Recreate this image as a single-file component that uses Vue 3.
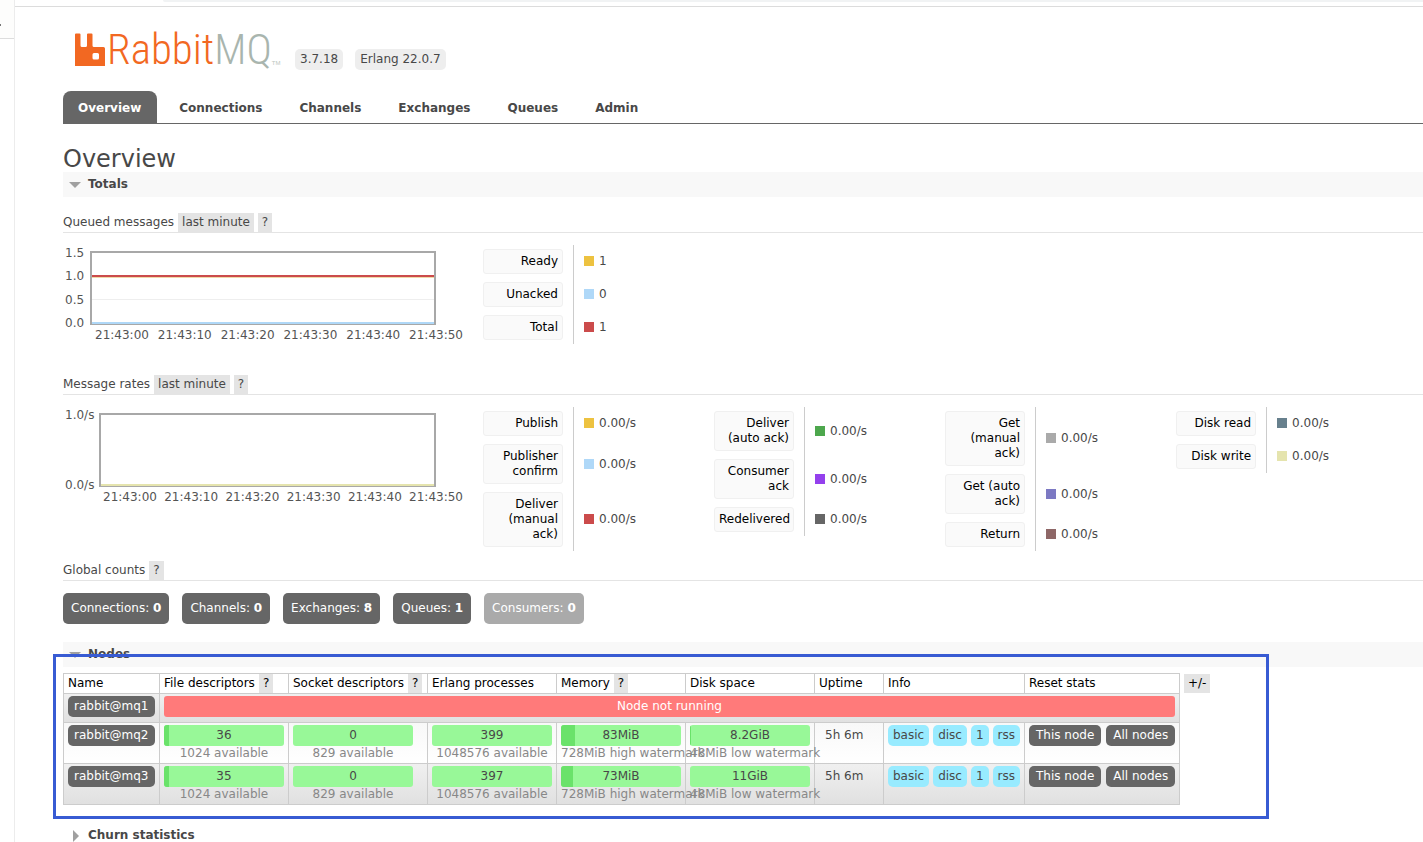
<script setup>
const tabs = ['Overview', 'Connections', 'Channels', 'Exchanges', 'Queues', 'Admin']

const queued = {
  ticks: ['1.5', '1.0', '0.5', '0.0'],
  legend: [
    { label: 'Ready', color: '#edc240', value: '1' },
    { label: 'Unacked', color: '#afd8f8', value: '0' },
    { label: 'Total', color: '#cb4b4b', value: '1' },
  ],
}

const times = ['21:43:00', '21:43:10', '21:43:20', '21:43:30', '21:43:40', '21:43:50']

const rates = [
  [
    { label: 'Publish', color: '#edc240' },
    { label: 'Publisher confirm', color: '#afd8f8' },
    { label: 'Deliver (manual ack)', color: '#cb4b4b' },
  ],
  [
    { label: 'Deliver (auto ack)', color: '#4da74d' },
    { label: 'Consumer ack', color: '#9440ed' },
    { label: 'Redelivered', color: '#666666' },
  ],
  [
    { label: 'Get (manual ack)', color: '#aaaaaa' },
    { label: 'Get (auto ack)', color: '#7c79c3' },
    { label: 'Return', color: '#8e6767' },
  ],
  [
    { label: 'Disk read', color: '#67808d' },
    { label: 'Disk write', color: '#e5e4ae' },
  ],
]

const counts = [
  { label: 'Connections', value: 0 },
  { label: 'Channels', value: 0 },
  { label: 'Exchanges', value: 8 },
  { label: 'Queues', value: 1 },
  { label: 'Consumers', value: 0, disabled: true },
]

const columns = [
  { label: 'Name' },
  { label: 'File descriptors', help: true },
  { label: 'Socket descriptors', help: true },
  { label: 'Erlang processes' },
  { label: 'Memory', help: true },
  { label: 'Disk space' },
  { label: 'Uptime' },
  { label: 'Info' },
  { label: 'Reset stats' },
]

const nodes = [
  {
    name: 'rabbit@mq2',
    bars: [
      { value: '36', used: 4, note: '1024 available' },
      { value: '0', used: 0, note: '829 available' },
      { value: '399', used: 0, note: '1048576 available' },
      { value: '83MiB', used: 12, note: '728MiB high watermark' },
      { value: '8.2GiB', used: 1, note: '48MiB low watermark' },
    ],
  },
  {
    name: 'rabbit@mq3',
    bars: [
      { value: '35', used: 4, note: '1024 available' },
      { value: '0', used: 0, note: '829 available' },
      { value: '397', used: 0, note: '1048576 available' },
      { value: '73MiB', used: 10, note: '728MiB high watermark' },
      { value: '11GiB', used: 0, note: '48MiB low watermark' },
    ],
  },
]
const info = ['basic', 'disc', '1', 'rss']
</script>

<template>
  <div class="window">
    <div class="side"><div class="side-tab"><div class="side-mark"></div></div></div>
    <div class="content">
      <div class="topbar"><div class="address"></div></div>
      <main class="page">
        <header class="brand">
          <a class="logo" href="#" aria-label="RabbitMQ">
            <svg width="30" height="33" viewBox="0 0 30 33" aria-hidden="true">
              <path
                fill="#f26822" fill-rule="evenodd"
                d="M1 0.500H4.500Q5.500 0.500 5.500 1.500V12.500Q5.500 14 7 14H10.500Q12 14 12 12.500V1.500Q12 0.500 13 0.500H16.500Q17.500 0.500 17.500 1.500V12.500Q17.500 14 19 14H28.500Q30 14 30 15.500V33H0V1.500Q0 0.500 1 0.500ZM19 20Q17.500 20 17.500 21.500V25Q17.500 26.500 19 26.500H22.500Q24 26.500 24 25V21.500Q24 20 22.500 20Z"
              />
            </svg>
            <span class="word"><span class="word-a">Rabbit</span><span class="word-b">MQ</span></span>
            <span class="tm">TM</span>
          </a>
          <span class="version">3.7.18</span>
          <span class="version">Erlang 22.0.7</span>
        </header>

        <nav class="tabs">
          <a v-for="(t, i) in tabs" :key="t" href="#" :class="['tab', { selected: i === 0 }]">{{ t }}</a>
        </nav>

        <h1>Overview</h1>
        <h2 class="section"><span class="arrow-down"></span>Totals</h2>

        <h3 class="sub">
          Queued messages <button class="chip">last minute</button><button class="chip">?</button>
        </h3>
        <div class="row">
          <div class="chart">
            <div class="axis"><span v-for="t in queued.ticks" :key="t">{{ t }}</span></div>
            <svg class="plot" viewBox="0 0 346 74" preserveAspectRatio="none" aria-hidden="true">
              <path d="M2 48.500H344" stroke="#eeeeee" />
              <path d="M2 25.500H344" stroke="#f0d9a8" stroke-width="3" />
              <path d="M2 25H344" stroke="#cb4b4b" stroke-width="2" />
              <rect x="1" y="1" width="344" height="72" fill="none" stroke="#a8a8a8" stroke-width="2" />
              <path d="M2 72H344" stroke="#afd8f8" stroke-width="2" />
            </svg>
            <div class="times"><span v-for="t in times" :key="t">{{ t }}</span></div>
          </div>
          <table class="legend">
            <tbody>
              <tr v-for="l in queued.legend" :key="l.label">
                <th scope="row"><span class="label">{{ l.label }}</span></th>
                <td><span class="swatch" :style="{ background: l.color }"></span>{{ l.value }}</td>
              </tr>
            </tbody>
          </table>
        </div>

        <h3 class="sub">
          Message rates <button class="chip">last minute</button><button class="chip">?</button>
        </h3>
        <div class="row">
          <div class="chart wide">
            <div class="axis"><span>1.0/s</span><span>0.0/s</span></div>
            <svg class="plot" viewBox="0 0 337 74" preserveAspectRatio="none" aria-hidden="true">
              <rect x="1" y="1" width="335" height="72" fill="none" stroke="#a8a8a8" stroke-width="2" />
              <path d="M2 72H335" stroke="#e5e4ae" stroke-width="2" />
            </svg>
            <div class="times"><span v-for="t in times" :key="t">{{ t }}</span></div>
          </div>
          <table v-for="(group, g) in rates" :key="g" class="legend">
            <tbody>
              <tr v-for="l in group" :key="l.label">
                <th scope="row"><span class="label">{{ l.label }}</span></th>
                <td><span class="swatch" :style="{ background: l.color }"></span>0.00/s</td>
              </tr>
            </tbody>
          </table>
        </div>

        <h3 class="sub">Global counts <button class="chip">?</button></h3>
        <div class="counts">
          <a v-for="c in counts" :key="c.label" href="#" :class="['count', { disabled: c.disabled }]">{{ c.label }}: <strong>{{ c.value }}</strong></a>
        </div>

        <h2 class="section"><span class="arrow-down"></span>Nodes</h2>
        <div class="nodes">
          <div class="marker"></div>
          <table class="list">
            <colgroup><col v-for="c in columns" :key="c.label" :class="'col-' + c.label.split(' ')[0].toLowerCase()" /></colgroup>
            <thead>
              <tr>
                <th v-for="c in columns" :key="c.label" scope="col">{{ c.label }}<button v-if="c.help" class="chip">?</button></th>
              </tr>
            </thead>
            <tbody>
              <tr class="alt down">
                <td><a class="dark" href="#">rabbit@mq1</a></td>
                <td colspan="8"><div class="red">Node not running</div></td>
              </tr>
              <tr v-for="(n, i) in nodes" :key="n.name" :class="{ alt: i === 1 }">
                <td><a class="dark" href="#">{{ n.name }}</a></td>
                <td v-for="(b, k) in n.bars" :key="k">
                  <div class="bar"><div class="used" :style="{ width: b.used + '%' }"></div><span class="value">{{ b.value }}</span></div>
                  <div class="note">{{ b.note }}</div>
                </td>
                <td class="uptime">5h 6m</td>
                <td><div class="pills tight"><span v-for="x in info" :key="x" class="info">{{ x }}</span></div></td>
                <td><div class="pills"><button class="dark">This node</button><button class="dark">All nodes</button></div></td>
              </tr>
            </tbody>
          </table>
          <button class="chip toggle">+/-</button>
        </div>

        <h2 class="section closed"><span class="arrow-right"></span>Churn statistics</h2>
      </main>
    </div>
  </div>
</template>

<style>
html, body { margin: 0; background: #fff; }
</style>

<style scoped>
.window {
  display: flex;
  height: 100vh;
  overflow: hidden;
  font: 12px/15px "DejaVu Sans", Verdana, sans-serif;
  color: #484848;
}
.window * { box-sizing: border-box; }
a { text-decoration: none; color: inherit; }
button { font: inherit; color: inherit; border: 0; margin: 0; padding: 0; background: none; cursor: pointer; }

.side { flex: 0 0 15px; border-right: 1px solid #ececec; }
.side-tab { height: 39px; padding-top: 24px; border-bottom: 1px solid #ddd; background: #fdfdfc; }
.side-mark { width: 1px; height: 2px; background: #777; }
.content { flex: 1; min-width: 0; }
.topbar { height: 7px; border-bottom: 1px solid #dcdcdc; }
.address { height: 2px; margin-left: 148px; background: #f1f3f4; border-radius: 0 0 0 4px; }
.page { padding: 24px 0 0 48px; }

.brand { display: flex; align-items: flex-end; height: 40px; padding-left: 12px; }
.logo { display: flex; align-items: flex-end; width: 220px; height: 40px; }
.logo svg { flex: none; margin-bottom: 5px; }
.word { font: 300 43px/40px "Roboto Condensed", Roboto, sans-serif; margin: 0 0 2px 2px; }
.word-a { color: #f26822; }
.word-b { color: #a9b5ae; }
.tm { font: 6px/8px "Liberation Sans", sans-serif; color: #bcc6c0; margin-bottom: 4px; }
.version { background: #eee; border-radius: 5px; padding: 3px 5px; margin: 0 12px 1px 0; }

.tabs { display: flex; margin-top: 20px; border-bottom: 1px solid #666; font-weight: bold; }
.tab { padding: 10px 15px 7px; margin-right: 7px; border-radius: 8px 8px 0 0; }
.tab.selected { background: #666; color: #fff; padding-right: 16px; }

h1 { font-size: 24px; line-height: 26px; font-weight: normal; margin: 22px 0 0; }
.section {
  display: flex;
  align-items: center;
  height: 25px;
  margin: 0 0 6px;
  padding-left: 6px;
  font-size: 12px;
  background: #f8f8f8;
}
.section.closed { background: none; }
.arrow-down { border: 6px solid transparent; border-top-color: #a0a0a0; border-bottom: 0; margin-right: 7px; }
.arrow-right { border: 6px solid transparent; border-left-color: #a0a0a0; border-right: 0; margin: 0 9px 0 4px; }

.sub {
  display: flex;
  align-items: flex-end;
  font-size: 12px;
  line-height: 19px;
  font-weight: normal;
  border-bottom: 1px solid #e4e4e4;
  margin: 0;
  height: 30px;
}
.chip { background: #e4e4e4; padding: 2px 4px; margin-left: 4px; line-height: 15px; }

.row { display: flex; align-items: flex-start; padding-top: 12px; min-height: 132px; }
.chart {
  flex: 0 0 399px;
  display: grid;
  grid-template-columns: 27px 346px;
  padding-top: 1px;
  margin-right: 21px;
  color: #545454;
}
.chart.wide { grid-template-columns: 36px 337px; }
.axis { display: flex; flex-direction: column; justify-content: space-between; height: 85px; padding-left: 2px; }
.plot { width: 100%; height: 74px; display: block; margin-top: 5px; }
.times { grid-column: 1 / -1; display: flex; justify-content: space-between; width: 368px; margin: -3px 0 0 32px; }
.wide .times { width: 360px; margin-left: 40px; }

.legend { border-collapse: separate; border-spacing: 0; margin-right: 78px; }
.legend th { width: 91px; padding: 4px 10px 4px 0; font-weight: normal; border-right: 1px solid #ccc; }
.legend td { padding: 0 0 0 10px; white-space: nowrap; }
.label { display: block; width: 80px; padding: 4px; text-align: right; color: #000; background: #fafafa; border: 1px solid #f0f0f0; border-radius: 3px; }
.swatch { display: inline-block; width: 10px; height: 10px; margin-right: 5px; vertical-align: -1px; }

.counts { display: flex; gap: 13px; margin: 12px 0 18px; }
.count { background: #666; color: #fff; border-radius: 5px; padding: 8px; }
.count.disabled { background: #aaa; }

.nodes { position: relative; display: flex; align-items: flex-start; margin-bottom: 18px; }
.marker { position: absolute; z-index: 2; left: -10px; top: -19px; width: 1216px; bottom: -14px; border: 3px solid #385bd3; pointer-events: none; }
.list { border-collapse: collapse; table-layout: fixed; width: 1117px; }
.list th { font-weight: normal; text-align: left; color: #000; height: 20px; padding: 0 4px; border: 1px solid #ccc; white-space: nowrap; }
.list td { padding: 2px 4px; vertical-align: top; border: 1px solid #ccc; }
.list tbody tr { background: linear-gradient(#f8f8f8, #fff); }
.list tbody tr.alt { background: linear-gradient(#f0f0f0, #e0e0e0); }
.down td { padding-bottom: 5px; }
.col-name { width: 96px; }
.col-file, .col-erlang, .col-memory, .col-disk { width: 129px; }
.col-socket { width: 139px; }
.col-uptime { width: 69px; }
.col-info { width: 141px; }
.dark { display: inline-block; background: #666; color: #fff; border-radius: 5px; padding: 3px 7px; white-space: nowrap; }
a.dark { padding: 3px 6px; }
.red { background: #ff7a7a; color: #fff; text-align: center; padding: 3px; border-radius: 3px; }
.bar { display: grid; width: 120px; height: 21px; border-radius: 3px; overflow: hidden; background: #98f898; }
.used, .value { grid-area: 1 / 1; }
.used { background: #6ae26a; }
.value { text-align: center; line-height: 21px; }
.note { width: 120px; text-align: center; white-space: nowrap; color: #888; }
.list td.uptime { padding: 5px 10px; }
.pills { display: flex; gap: 5px; }
.pills.tight { gap: 4px; }
.info { background: #98ebff; border-radius: 5px; padding: 3px 5px; }
.toggle { color: #000; margin-top: 1px; }
</style>
